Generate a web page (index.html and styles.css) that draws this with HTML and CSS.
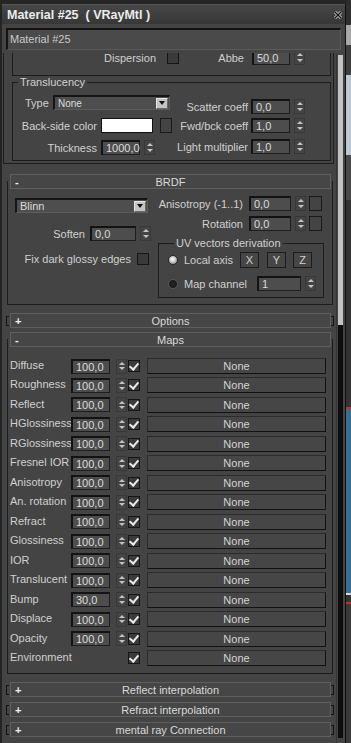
FILE: index.html
```html
<!DOCTYPE html>
<html lang="en">
<head>
    <meta charset="UTF-8">
    <meta name="viewport" content="width=device-width, initial-scale=1.0">
    <title>Material #25 (VRayMtl)</title>
    <link rel="stylesheet" href="styles.css">
</head>
<body>
<div class="screen">
    <div class="window">
        <div class="title-bar">
            <span class="title">Material #25  ( VRayMtl )</span>
            <svg class="close" width="8" height="8" viewBox="0 0 8 8">
                <path d="M1 1L7 7M7 1L1 7" stroke="#cfcfcf" stroke-width="3"/>
                <path d="M1 1L7 7M7 1L1 7" stroke="#151515" stroke-width="1.4"/>
            </svg>
        </div>
        <div class="name-bar">
            <div class="name-field">Material #25</div>
        </div>

        <div class="panel">
            <div class="scroll">
                <!-- basic parameters, scrolled so only the bottom shows -->
                <div class="basic-body">
                    <div class="group fog">
                        <div class="row">
                            <span class="lbl" style="width:143px">Dispersion</span>
                            <span class="check dispersion-check"></span>
                            <span class="lbl" style="width:65px">Abbe</span>
                            <span class="field abbe-field">50,0</span>
                            <span class="arrows"></span>
                        </div>
                    </div>
                    <fieldset class="group translucency">
                        <legend>Translucency</legend>
                        <div class="cols">
                            <div class="tl-left">
                                <div class="row type-row">
                                    <span class="type-label">Type</span>
                                    <div class="dropdown type-drop"><span>None</span><span class="drop-btn"></span></div>
                                </div>
                                <div class="row backside-row">
                                    <span class="lbl" style="width:84px">Back-side color</span>
                                    <span class="swatch"></span>
                                    <span class="slot"></span>
                                </div>
                                <div class="row thickness-row">
                                    <span class="lbl" style="width:84px">Thickness</span>
                                    <span class="field thickness-field">1000,0</span>
                                    <span class="arrows"></span>
                                </div>
                            </div>
                            <div class="tl-right">
                                <div class="row scatter-row">
                                    <span class="lbl" style="width:70px">Scatter coeff</span>
                                    <span class="field">0,0</span>
                                    <span class="arrows"></span>
                                </div>
                                <div class="row fwd-row">
                                    <span class="lbl" style="width:70px">Fwd/bck coeff</span>
                                    <span class="field">1,0</span>
                                    <span class="arrows"></span>
                                </div>
                                <div class="row light-row">
                                    <span class="lbl" style="width:70px">Light multiplier</span>
                                    <span class="field">1,0</span>
                                    <span class="arrows"></span>
                                </div>
                            </div>
                        </div>
                    </fieldset>
                </div>

                <!-- BRDF -->
                <div class="rollout brdf">
                    <div class="rollout-header"><span class="sign">-</span><span class="rollout-title">BRDF</span><span class="sign"></span></div>
                    <div class="rollout-body brdf-body">
                        <div class="brdf-left">
                            <div class="dropdown blinn-drop"><span>Blinn</span><span class="drop-btn"></span></div>
                            <div class="row soften-row">
                                <span>Soften</span>
                                <span class="field soften-field">0,0</span>
                                <span class="arrows"></span>
                            </div>
                            <div class="row fix-row">
                                <span>Fix dark glossy edges</span>
                                <span class="check"></span>
                            </div>
                        </div>
                        <div class="brdf-right">
                            <div class="row aniso-row">
                                <span>Anisotropy (-1..1)</span>
                                <span class="field wide">0,0</span>
                                <span class="arrows"></span>
                                <span class="slot"></span>
                            </div>
                            <div class="row rotation-row">
                                <span>Rotation</span>
                                <span class="field wide">0,0</span>
                                <span class="arrows"></span>
                                <span class="slot"></span>
                            </div>
                            <fieldset class="group uv">
                                <legend>UV vectors derivation</legend>
                                <div class="row uv-row">
                                    <span class="radio on"></span>
                                    <span class="uv-label" style="width:56px">Local axis</span>
                                    <span class="axis-btn">X</span>
                                    <span class="axis-btn">Y</span>
                                    <span class="axis-btn">Z</span>
                                </div>
                                <div class="row uv-row channel-row">
                                    <span class="radio"></span>
                                    <span class="uv-label" style="width:73px">Map channel</span>
                                    <span class="field channel-field">1</span>
                                    <span class="arrows"></span>
                                </div>
                            </fieldset>
                        </div>
                    </div>
                </div>

                <div class="rollout collapsed options">
                    <span class="bracket"></span>
                    <div class="rollout-header"><span class="sign">+</span><span class="rollout-title">Options</span><span class="sign"></span></div>
                    <span class="bracket right"></span>
                </div>

                <!-- Maps -->
                <div class="rollout maps">
                    <div class="rollout-header"><span class="sign">-</span><span class="rollout-title">Maps</span><span class="sign"></span></div>
                    <div class="rollout-body maps-body">
                        <div class="map-grid" id="mapGrid"></div>
                    </div>
                </div>

                <div class="rollout collapsed">
                    <span class="bracket"></span>
                    <div class="rollout-header"><span class="sign">+</span><span class="rollout-title">Reflect interpolation</span><span class="sign"></span></div>
                    <span class="bracket right"></span>
                </div>
                <div class="rollout collapsed tight">
                    <span class="bracket"></span>
                    <div class="rollout-header"><span class="sign">+</span><span class="rollout-title">Refract interpolation</span><span class="sign"></span></div>
                    <span class="bracket right"></span>
                </div>
                <div class="rollout collapsed tight">
                    <span class="bracket"></span>
                    <div class="rollout-header"><span class="sign">+</span><span class="rollout-title">mental ray Connection</span><span class="sign"></span></div>
                    <span class="bracket right"></span>
                </div>
            </div>

            <div class="scrollbar">
                <div class="track"><div class="thumb"></div></div>
            </div>
        </div>
    </div>

    <!-- sliver of the viewport behind the editor -->
    <div class="backdrop">
        <div class="bd" style="height:25px;background:#2e2e2e"></div>
        <div class="bd" style="height:20px;background:#a8a8a8"></div>
        <div class="bd" style="height:30px;background:#3e3e3e"></div>
        <div class="bd" style="height:80px;background:#bfc9d3"></div>
        <div class="bd" style="height:45px;background:#494949"></div>
        <div class="bd" style="height:207px;background:#333"></div>
        <div class="bd" style="height:2px;background:#c42b2b"></div>
        <div class="bd" style="height:184px;background:#3b6d91"></div>
        <div class="bd" style="height:2px;background:#dedede"></div>
        <div class="bd" style="height:7px;background:#333"></div>
        <div class="bd" style="height:2px;background:#c42b2b"></div>
        <div class="bd" style="height:139px;background:#383838"></div>
    </div>
</div>

<script>
    const mapGrid = document.getElementById('mapGrid');
    const maps = [
        ['Diffuse', '100,0'],
        ['Roughness', '100,0'],
        ['Reflect', '100,0'],
        ['HGlossiness', '100,0'],
        ['RGlossiness', '100,0'],
        ['Fresnel IOR', '100,0'],
        ['Anisotropy', '100,0'],
        ['An. rotation', '100,0'],
        ['Refract', '100,0'],
        ['Glossiness', '100,0'],
        ['IOR', '100,0'],
        ['Translucent', '100,0'],
        ['Bump', '30,0'],
        ['Displace', '100,0'],
        ['Opacity', '100,0'],
        ['Environment', null]
    ];

    function addCell(cls, text) {
        const el = document.createElement('span');
        if (cls) el.className = cls;
        if (text) el.textContent = text;
        mapGrid.appendChild(el);
    }

    maps.forEach(([name, amount]) => {
        addCell('map-label', name);
        if (amount) {
            addCell('field', amount);
            addCell('arrows');
        } else {
            addCell('');
            addCell('');
        }
        addCell('check');
        addCell('map-btn', 'None');
    });
</script>
</body>
</html>
```

FILE: styles.css
```css
* {
    box-sizing: border-box;
}

body {
    margin: 0;
    background-color: #262626;
    font-family: "Liberation Sans", Arial, sans-serif;
    font-size: 11px;
    color: #d0d0d0;
}

.screen {
    display: flex;
    width: 351px;
    height: 743px;
    overflow: hidden;
}

.window {
    width: 346px;
    height: 739px;
    margin-top: 4px;
    display: flex;
    flex-direction: column;
    background-color: #444;
    border-left: 2px solid #242424;
    border-right: 1px solid #101010;
}

.title-bar {
    height: 20px;
    display: flex;
    align-items: center;
    justify-content: space-between;
    padding: 0 3px 0 5px;
    background: linear-gradient(#474747, #373737);
    border-top: 1px solid #555;
}

.title {
    font-weight: bold;
    font-size: 12.5px;
    color: #ececec;
    white-space: pre;
}

.name-bar {
    height: 29px;
    padding: 4px 4px 3px 4px;
}

.name-field {
    height: 22px;
    padding-left: 2px;
    line-height: 18px;
    font-size: 11px;
    color: #c8c8c8;
    background-color: #4a4a4a;
    border-top: 2px solid #141414;
    border-left: 2px solid #141414;
    border-right: 1px solid #5a5a5a;
    border-bottom: 1px solid #5a5a5a;
}

.panel {
    flex: 1;
    display: flex;
    min-height: 0;
}

.scroll {
    width: 334px;
    overflow: hidden;
}

.scrollbar {
    width: 9px;
    padding: 2px 2px 5px 1px;
    border-left: 1px solid #363636;
}

.track {
    height: 100%;
    background-color: #0e0e0e;
}

.thumb {
    height: 270px;
    background-color: #c3c3c3;
}

.backdrop {
    width: 5px;
    display: flex;
    flex-direction: column;
}

.bd {
    flex-shrink: 0;
}

/* common controls */
.row {
    display: flex;
    align-items: center;
    height: 15px;
    white-space: nowrap;
}

.lbl {
    display: flex;
    justify-content: flex-end;
    flex-shrink: 0;
}

.field {
    width: 39px;
    height: 15px;
    padding-left: 3px;
    line-height: 12px;
    color: #dcdcdc;
    background-color: #4d4d4d;
    border-top: 2px solid #131313;
    border-left: 2px solid #131313;
    border-right: 1px solid #1e1e1e;
    border-bottom: 1px solid #1e1e1e;
    flex-shrink: 0;
}

.arrows {
    width: 11px;
    height: 15px;
    display: flex;
    flex-direction: column;
    align-items: center;
    justify-content: space-evenly;
    border: 1px solid #383838;
    margin-left: 4px;
    flex-shrink: 0;
}

.arrows::before {
    content: '';
    border-left: 3px solid transparent;
    border-right: 3px solid transparent;
    border-bottom: 3px solid #c4c4c4;
}

.arrows::after {
    content: '';
    border-left: 3px solid transparent;
    border-right: 3px solid transparent;
    border-top: 3px solid #c4c4c4;
}

.check {
    width: 12px;
    height: 12px;
    display: flex;
    align-items: center;
    justify-content: center;
    background-color: #3a3a3a;
    border: 1px solid #161616;
    flex-shrink: 0;
}

.map-grid .check::after {
    content: '';
    width: 4px;
    height: 7px;
    margin-top: -2px;
    border: solid #e8e8e8;
    border-width: 0 2px 2px 0;
    transform: rotate(40deg);
}

.slot {
    width: 13px;
    height: 15px;
    border: 1px solid #1a1a1a;
    flex-shrink: 0;
}

.dropdown {
    height: 15px;
    display: flex;
    align-items: center;
    justify-content: space-between;
    padding: 0 1px 0 3px;
    background-color: #4e4e4e;
    border-top: 2px solid #151515;
    border-left: 2px solid #151515;
    border-right: 1px solid #5c5c5c;
    border-bottom: 1px solid #5c5c5c;
    color: #dcdcdc;
}

.drop-btn {
    width: 12px;
    height: 11px;
    display: flex;
    align-items: center;
    justify-content: center;
    background-color: #c4c4c4;
    border: 1px solid #e6e6e6;
    border-right-color: #6a6a6a;
    border-bottom-color: #6a6a6a;
}

.drop-btn::after {
    content: '';
    border-left: 3px solid transparent;
    border-right: 3px solid transparent;
    border-top: 4px solid #111;
}

.group {
    border: 1px solid #1d1d1d;
}

fieldset.group {
    margin: 0;
    padding: 0;
    min-width: 0;
}

fieldset.group legend {
    padding: 0 2px;
    line-height: 12px;
    color: #d0d0d0;
}

/* basic parameters (bottom part) */
.basic-body {
    margin: -22px 2px 0 1px;
    padding: 0 2px 2px 8px;
    border: 1px solid #1d1d1d;
}

.fog {
    padding: 17px 0 10px 0;
}

.dispersion-check {
    margin-left: 11px;
}

.abbe-field {
    width: 38px;
    margin-left: 8px;
}

.translucency {
    padding-bottom: 5px !important;
}

.translucency legend {
    margin-left: 5px;
}

.cols {
    display: flex;
}

.tl-left {
    width: 165px;
    padding-top: 7px;
}

.tl-right {
    padding-top: 11px;
}

.type-row {
    padding-left: 12px;
}

.type-label {
    width: 28px;
}

.type-drop {
    width: 117px;
    font-size: 10px;
}

.backside-row {
    margin-top: 8px;
}

.swatch {
    width: 52px;
    height: 15px;
    margin-left: 4px;
    background-color: #fff;
    border: 1px solid #111;
}

.backside-row .slot {
    width: 12px;
    margin-left: 7px;
}

.thickness-row {
    margin-top: 7px;
}

.thickness-field {
    margin-left: 4px;
}

.tl-right .field {
    margin-left: 3px;
}

.fwd-row {
    margin-top: 4px;
}

.light-row {
    margin-top: 6px;
}

/* rollouts */
.rollout {
    margin: 10px 3px 0 5px;
}

.rollout-header {
    height: 15px;
    margin: 0 2px 0 3px;
    padding: 0 4px;
    display: flex;
    align-items: center;
    background-color: #464646;
    border: 1px solid #5f5f5f;
    color: #dadada;
    position: relative;
    z-index: 1;
}

.sign {
    width: 8px;
    font-weight: bold;
    color: #f0f0f0;
}

.rollout-title {
    flex: 1;
    text-align: center;
}

.rollout-body {
    margin-top: -8px;
    border: 1px solid #1d1d1d;
    border-top: none;
}

.collapsed {
    display: flex;
    align-items: center;
    margin: 8px 2px 0 4px;
}

.collapsed.options {
    margin-top: 8px;
}

.collapsed.tight {
    margin-top: 5px;
}

.collapsed .rollout-header {
    flex: 1;
    margin: 0 0 0 1px;
}

.bracket {
    width: 3px;
    height: 10px;
    border: 1px solid #141414;
    border-right: none;
}

.bracket.right {
    border: 1px solid #141414;
    border-left: none;
}

/* BRDF */
.brdf-body {
    display: flex;
    padding: 0 0 6px 7px;
}

.brdf-left {
    width: 136px;
    padding-top: 17px;
}

.blinn-drop {
    width: 133px;
}

.soften-row {
    margin-top: 13px;
    justify-content: flex-end;
}

.soften-field {
    width: 46px;
    margin-left: 5px;
}

.fix-row {
    margin-top: 10px;
    justify-content: flex-end;
    padding-right: 2px;
}

.fix-row .check {
    margin-left: 6px;
}

.brdf-right {
    width: 166px;
    margin-left: 7px;
    padding-top: 15px;
}

.aniso-row,
.rotation-row {
    justify-content: flex-end;
    padding-right: 2px;
}

.rotation-row {
    margin-top: 5px;
}

.field.wide {
    width: 42px;
    margin-left: 6px;
}

.aniso-row .slot,
.rotation-row .slot {
    margin-left: 3px;
}

.uv {
    margin-top: 6px !important;
    padding: 0 0 6px 9px !important;
}

.uv legend {
    margin-left: 6px;
}

.uv-row {
    margin-top: 3px;
    height: 16px;
}

.channel-row {
    margin-top: 8px;
    height: 15px;
}

.radio {
    width: 10px;
    height: 10px;
    border-radius: 50%;
    background: radial-gradient(circle at 50% 50%, #262626 0, #1a1a1a 70%);
    border: 1px solid #575757;
    flex-shrink: 0;
}

.radio.on {
    background: radial-gradient(circle at 45% 40%, #ffffff 0, #d6d6d6 35%, #8e8e8e 80%);
    border-color: #2a2a2a;
}

.uv-label {
    margin-left: 6px;
}

.axis-btn {
    width: 19px;
    height: 16px;
    display: flex;
    align-items: center;
    justify-content: center;
    background-color: #464646;
    border: 1px solid #1c1c1c;
    flex-shrink: 0;
}

.axis-btn + .axis-btn {
    margin-left: 8px;
}

.axis-btn:last-child {
    margin-left: 7px;
}

.channel-field {
    width: 44px;
}

/* maps */
.maps {
    margin-top: 4px;
}

.maps-body {
    padding: 19px 0 7px 2px;
}

.map-grid {
    display: grid;
    grid-template-columns: 61px 42px 15px 19px 179px;
    grid-auto-rows: 16px;
    row-gap: 3.47px;
    align-items: center;
}

.map-grid .arrows {
    margin-left: 3px;
}

.map-label {
    white-space: nowrap;
    margin-top: -2px;
}

.map-btn {
    height: 16px;
    display: flex;
    align-items: center;
    justify-content: center;
    background-color: #464646;
    border: 1px solid #121212;
    border-top-color: #2c2c2c;
    border-left-color: #2c2c2c;
    color: #d4d4d4;
}
```
